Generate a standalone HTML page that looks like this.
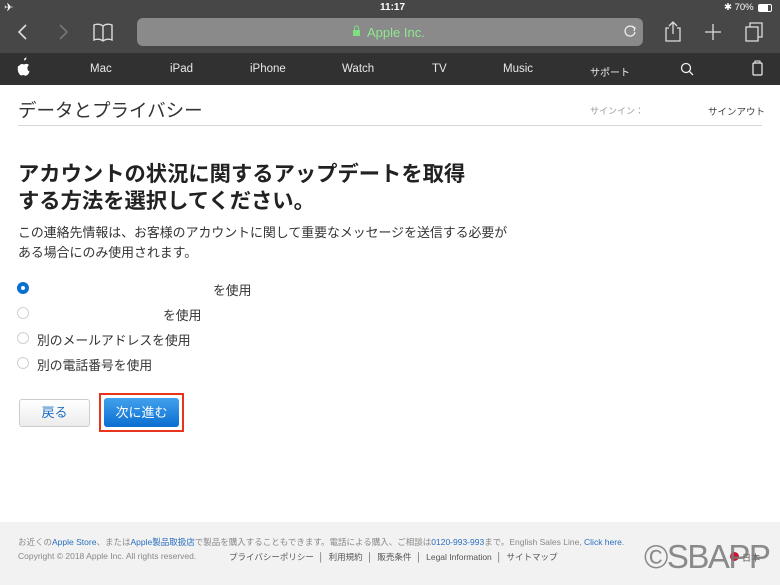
<!DOCTYPE html>
<html><head><meta charset="utf-8"><style>
*{margin:0;padding:0;box-sizing:border-box}
body{width:780px;height:585px;overflow:hidden;background:#fff;font-family:"Liberation Sans","Noto Sans CJK JP",sans-serif;position:relative}
.a{position:absolute;white-space:nowrap}
.top{position:absolute;left:0;top:0;width:780px;height:53px;background:#474747}
.nav{position:absolute;left:0;top:53px;width:780px;height:32px;background:#313131}
.nav span{position:absolute;top:10px;color:#e8e8e8;font-size:11.5px}
.radio{position:absolute;left:17px;width:12px;height:12px;border:1px solid #d0d0d0;border-radius:50%;background:#fff}
.ft{font-size:8.5px;color:#888}
.ft b{font-weight:normal;color:#2a6fc0}
</style></head><body>
<div class="top"></div>
<div class="a" style="left:4px;top:1px;color:#fff;font-size:11px">✈</div>
<div class="a" style="left:380px;top:2px;color:#fff;font-size:10px;font-weight:bold">11:17</div>
<div class="a" style="left:724px;top:2px;color:#fff;font-size:9.5px">✱ 70%</div>
<div class="a" style="left:758px;top:4px;width:14px;height:8px;border:1px solid #fff;border-radius:2px"><div style="width:9px;height:6px;background:#fff"></div></div>
<svg class="a" style="left:0;top:18px" width="780" height="32">
<path d="M26 7 L19 14 L26 21" stroke="#ddd" stroke-width="1.6" fill="none"/>
<path d="M60 7 L67 14 L60 21" stroke="#777" stroke-width="1.6" fill="none"/>
<path d="M94 7 q5-2 9 1 q4-3 9-1 v15 q-5-2-9 1 q-4-3-9-1z M103 8 v15" stroke="#ddd" stroke-width="1.4" fill="none"/>
<rect x="137" y="0" width="506" height="28" rx="6" fill="#8a8a8a"/>
<rect x="353" y="12" width="7" height="6" fill="#7fe07f"/><path d="M354.5 12 v-2 a2 2 0 0 1 4 0 v2" stroke="#7fe07f" fill="none"/>
<path d="M634 10 a5 5 0 1 0 1 4 M632 8 l3 2 l-1 3" stroke="#eee" stroke-width="1.3" fill="none"/>
<path d="M669 10 h-3 v13 h14 v-13 h-3 M673 4 v12 M669 8 l4-4 l4 4" stroke="#ddd" stroke-width="1.3" fill="none"/>
<path d="M713 6 v16 M705 14 h16" stroke="#ddd" stroke-width="1.3"/>
<rect x="746" y="9" width="12" height="14" stroke="#ddd" stroke-width="1.3" fill="none"/><path d="M750 9 v-4 h12 v14 h-4" stroke="#ddd" stroke-width="1.3" fill="none"/>
</svg>
<div class="a" style="left:367px;top:25px;color:#8fe88f;font-size:13px">Apple Inc.</div>
<div class="nav">
<span style="left:90px">Mac</span><span style="left:170px">iPad</span><span style="left:250px">iPhone</span><span style="left:342px">Watch</span><span style="left:432px">TV</span><span style="left:503px">Music</span><span style="left:590px;top:11px;font-size:10px">サポート</span>
</div>
<svg class="a" style="left:0;top:53px" width="780" height="32"><circle cx="686" cy="15" r="4.5" stroke="#eee" stroke-width="1.3" fill="none"/><path d="M689 18 l4 4" stroke="#eee" stroke-width="1.3"/><rect x="753" y="10" width="9" height="12" rx="1" stroke="#eee" stroke-width="1.2" fill="none"/><path d="M755 10 v-2 h5 v2" stroke="#eee" fill="none"/>
<path d="M24 7.5 q2.5-0.5 2.5-3 q-2.5 0.3-2.5 3z M19 13 q2-3 5-1.5 q3-1.5 5 0.5 q-2 1.5-1.5 4 q0.5 2 2 2.5 q-1 3-3 4 q-1.5 0.5-2.5-0.2 q-1-0.5-2 0 q-1.5 0.5-2.5-1 q-2.5-3-1.5-8.3z" fill="#fff"/></svg>
<div class="a" style="left:18px;top:97px;font-size:18.5px;color:#333">データとプライバシー</div>
<div class="a" style="left:590px;top:104px;font-size:9px;color:#999">サインイン：</div>
<div class="a" style="left:708px;top:104px;font-size:9.5px;color:#444">サインアウト</div>
<div class="a" style="left:18px;top:125px;width:744px;height:1px;background:#d6d6d6"></div>
<div class="a" style="left:18px;top:161px;font-size:21.3px;font-weight:bold;color:#222;line-height:27px">アカウントの状況に関するアップデートを取得<br>する方法を選択してください。</div>
<div class="a" style="left:18px;top:223px;font-size:12.9px;color:#333;line-height:20px">この連絡先情報は、お客様のアカウントに関して重要なメッセージを送信する必要が<br>ある場合にのみ使用されます。</div>
<div class="radio" style="top:282px;background:#0a70d0;border-color:#0a70d0"><div style="width:4px;height:4px;background:#fff;border-radius:50%;margin:3px"></div></div>
<div class="radio" style="top:307px"></div><div class="radio" style="top:332px"></div><div class="radio" style="top:357px"></div>
<div class="a" style="left:213px;top:280px;font-size:12.8px;color:#333">を使用</div>
<div class="a" style="left:163px;top:305px;font-size:12.8px;color:#333">を使用</div>
<div class="a" style="left:37px;top:330px;font-size:12.8px;color:#333">別のメールアドレスを使用</div>
<div class="a" style="left:37px;top:355px;font-size:12.8px;color:#333">別の電話番号を使用</div>
<div class="a" style="left:19px;top:399px;width:71px;height:28px;border:1px solid #ccc;border-radius:3px;background:linear-gradient(#fff,#ececec);color:#1a6fc4;font-size:13px;text-align:center;line-height:26px">戻る</div>
<div class="a" style="left:99px;top:393px;width:85px;height:39px;border:2px solid #e8341c"></div>
<div class="a" style="left:104px;top:398px;width:75px;height:29px;border-radius:3px;background:linear-gradient(#42a1ec,#0a6ed1);color:#fff;font-size:13px;text-align:center;line-height:29px">次に進む</div>
<div class="a" style="left:0;top:522px;width:780px;height:63px;background:#f2f2f2"></div>
<div class="a ft" style="left:18px;top:536px">お近くの<b>Apple Store</b>、または<b>Apple製品取扱店</b>で製品を購入することもできます。電話による購入、ご相談は<b>0120-993-993</b>まで。English Sales Line, <b>Click here</b>.</div>
<div class="a ft" style="left:18px;top:551px">Copyright © 2018 Apple Inc. All rights reserved.</div>
<div class="a ft" style="left:229px;top:551px;color:#555">プライバシーポリシー &nbsp;│ &nbsp;利用規約 &nbsp;│ &nbsp;販売条件 &nbsp;│ &nbsp;Legal Information &nbsp;│ &nbsp;サイトマップ</div>
<div class="a" style="left:730px;top:552px;width:9px;height:9px;border-radius:50%;background:#d0102a"></div>
<div class="a" style="left:742px;top:551px;font-size:9px;color:#555">日本</div>
<div class="a" style="left:644px;top:538px;font-size:33px;color:rgba(120,120,120,.85);letter-spacing:-1.5px">©SBAPP</div>
</body></html>
